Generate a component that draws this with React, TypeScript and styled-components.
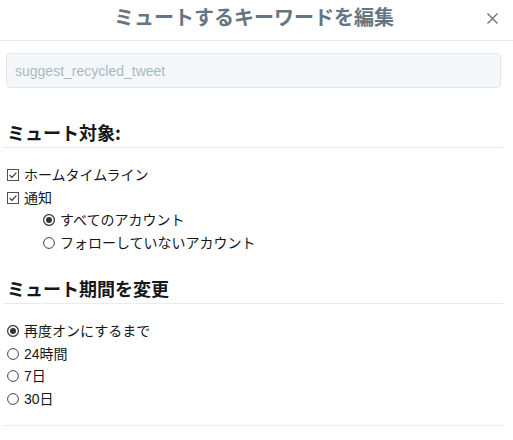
import React from "react";
import styled, { createGlobalStyle } from "styled-components";

const Global = createGlobalStyle`
  html, body { margin: 0; padding: 0; background: #ffffff; }
  body {
    font-family: "Liberation Sans", "Noto Sans CJK JP", Arial, sans-serif;
    color: #14171a;
  }
`;

const Dialog = styled.div`
  width: 513px;
  height: 440px;
  background: #fff;
  display: flex;
  flex-direction: column;
`;

const Header = styled.div`
  height: 40px;
  border-bottom: 1px solid #e6ecf0;
  display: flex;
  align-items: flex-start;
  justify-content: center;
  position: relative;
`;

const Title = styled.h2`
  margin: 4px 5px 0 0;
  font-size: 20px;
  line-height: 26px;
  font-weight: bold;
  color: #66757f;
  font-family: "Noto Sans CJK JP", "Liberation Sans", sans-serif;
`;

const Close = styled.button`
  position: absolute;
  top: 11px;
  right: 14px;
  width: 14px;
  height: 14px;
  padding: 0;
  border: 0;
  background: transparent;
  display: flex;
  align-items: center;
  justify-content: center;
  cursor: pointer;
`;

const Body = styled.div`
  padding: 12px 10px 0 3px;
  display: flex;
  flex-direction: column;
`;

const Input = styled.input`
  margin: 0 2px 0 3px;
  height: 35px;
  box-sizing: border-box;
  background: #f5f8fa;
  border: 1px solid #e1e8ed;
  border-radius: 4px;
  padding: 0 8px;
  font-family: "Liberation Sans", Arial, sans-serif;
  font-size: 14px;
  color: #aab8c2;
  outline: none;
  &::placeholder { color: #aab8c2; }
`;

const Heading = styled.h3<{ $top: number }>`
  margin: ${(p) => p.$top}px 0 0 0;
  padding: 0 0 3px 4px;
  font-size: 18px;
  line-height: 24px;
  font-weight: bold;
  color: #14171a;
  border-bottom: 1px solid #e6ecf0;
  font-family: "Noto Sans CJK JP", "Liberation Sans", sans-serif;
`;

const List = styled.div<{ $bottom?: boolean }>`
  display: flex;
  flex-direction: column;
  padding: 16px 0 ${(p) => (p.$bottom ? "15px" : "0")} 4px;
  border-bottom: ${(p) => (p.$bottom ? "1px solid #e6ecf0" : "none")};
`;

const Row = styled.label<{ $indent?: number }>`
  display: flex;
  align-items: center;
  gap: 5px;
  height: 22.5px;
  padding-left: ${(p) => p.$indent ?? 0}px;
  font-size: 14px;
  line-height: 22.5px;
  color: #14171a;
  white-space: nowrap;
`;

const Mark = styled.span`
  width: 12px;
  height: 12px;
  display: inline-flex;
  flex: none;
`;

const CheckBox = () => (
  <Mark>
    <svg width="12" height="12" viewBox="0 0 12 12">
      <rect x="0.5" y="0.5" width="11" height="11" fill="#fff" stroke="#505050" strokeWidth="1" />
      <path d="M2.6 6.1 L4.9 8.4 L9.4 3.6" fill="none" stroke="#333" strokeWidth="1.2" />
    </svg>
  </Mark>
);

const Radio = ({ checked }: { checked?: boolean }) => (
  <Mark>
    <svg width="12" height="12" viewBox="0 0 12 12">
      <circle cx="6" cy="6" r="5.4" fill="#fff" stroke="#444" strokeWidth={checked ? 1.3 : 1} />
      {checked && <circle cx="6" cy="6" r="3" fill="#333" />}
    </svg>
  </Mark>
);

export default function App() {
  return (
    <>
      <Global />
      <Dialog>
        <Header>
          <Title>ミュートするキーワードを編集</Title>
          <Close aria-label="閉じる">
            <svg width="11" height="11" viewBox="0 0 11 11">
              <path d="M0.5 0.5 L10.5 10.5 M10.5 0.5 L0.5 10.5" stroke="#66757f" strokeWidth="1.4" fill="none" />
            </svg>
          </Close>
        </Header>
        <Body>
          <Input readOnly value="suggest_recycled_tweet" />
          <Heading $top={32}>ミュート対象:</Heading>
          <List>
            <Row>
              <CheckBox />
              ホームタイムライン
            </Row>
            <Row>
              <CheckBox />
              通知
            </Row>
            <Row $indent={36}>
              <Radio checked />
              すべてのアカウント
            </Row>
            <Row $indent={36}>
              <Radio />
              フォローしていないアカウント
            </Row>
          </List>
          <Heading $top={22}>ミュート期間を変更</Heading>
          <List $bottom>
            <Row>
              <Radio checked />
              再度オンにするまで
            </Row>
            <Row>
              <Radio />
              24時間
            </Row>
            <Row>
              <Radio />
              7日
            </Row>
            <Row>
              <Radio />
              30日
            </Row>
          </List>
        </Body>
      </Dialog>
    </>
  );
}
